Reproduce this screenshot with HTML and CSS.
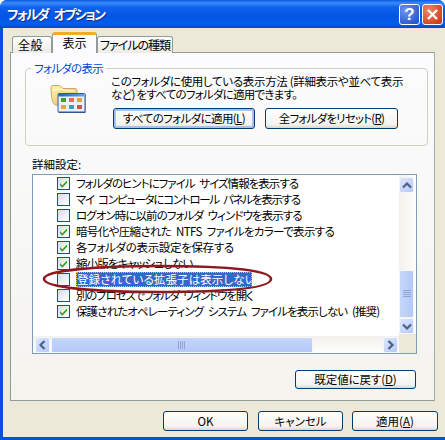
FILE: index.html
```html
<!DOCTYPE html>
<html lang="ja">
<head>
<meta charset="utf-8">
<title>フォルダ オプション</title>
<link rel="stylesheet" href="styles.css">
</head>
<body>
<svg class="defs" width="0" height="0">
  <defs>
    <symbol id="tick" viewBox="0 0 11 11"><path d="M2 5l2.300 2.500L9 2.500v2.300L4.300 9.800 2 7.300z" fill="#21a121"/></symbol>
  </defs>
</svg>
<div class="window">
  <header class="titlebar">
    <span class="title">フォルダ オプション</span>
    <div class="caption-buttons">
      <button class="cap cap-help">?</button>
      <button class="cap cap-close">
        <svg width="13" height="13" viewBox="0 0 13 13"><path d="M2 2l9 9M11 2l-9 9" stroke="#fff" stroke-width="2.400" fill="none"/></svg>
      </button>
    </div>
  </header>
  <div class="client">
    <nav class="tabs">
      <div class="tab tab-general">全般</div>
      <div class="tab tab-active">表示</div>
      <div class="tab tab-types">ファイルの種類</div>
    </nav>
    <section class="panel">
      <fieldset class="group">
        <legend class="legend">フォルダの表示</legend>
        <div class="group-body">
          <svg class="folder-icon" width="36" height="30" viewBox="0 0 36 30">
            <defs>
              <linearGradient id="fold" x1="0" y1="0" x2="1" y2="1"><stop offset="0" stop-color="#fff3b8"/><stop offset="1" stop-color="#e0bd5c"/></linearGradient>
              <linearGradient id="bar" x1="0" y1="0" x2="1" y2="0"><stop offset="0" stop-color="#2a5fc0"/><stop offset="1" stop-color="#6f9fe8"/></linearGradient>
            </defs>
            <path d="M1 3.500Q1 1.500 3 1.500h7l3 3h12q2 0 2 2V21H6Q2.500 21 1.500 12z" fill="url(#fold)" stroke="#c9ad5e"/>
            <path d="M3 6.500q5-2 10-1l3 1.500h9" fill="none" stroke="#fffbe0"/>
            <rect x="8.500" y="10" width="27" height="19" fill="#33507f"/>
            <rect x="8" y="9.500" width="27" height="18.500" rx="1" fill="#eaf0f7" stroke="#2f5c9e"/>
            <rect x="8.500" y="10" width="26" height="2.500" fill="url(#bar)"/>
            <rect x="11" y="14" width="5" height="4" fill="#3f9b2a"/><rect x="19" y="14" width="5" height="4" fill="#e0705a"/><rect x="27" y="14" width="5" height="4" fill="#d6a63a"/>
            <rect x="11" y="21" width="5" height="4" fill="#e9a927"/><rect x="19" y="21" width="5" height="4" fill="#2d9fd0"/><rect x="27" y="21" width="5" height="4" fill="#d8503f"/>
          </svg>
          <div class="group-main">
            <p class="desc"><span class="desc-1">このフォルダに使用している表示方法 (詳細表示や並べて表示</span><br><span class="desc-2">など) をすべてのフォルダに適用できます。</span></p>
            <div class="group-buttons">
              <button class="btn btn-default btn-apply-all">すべてのフォルダに適用(<u>L</u>)</button>
              <button class="btn btn-reset-all">全フォルダをリセット(<u>R</u>)</button>
            </div>
          </div>
        </div>
      </fieldset>
      <div class="adv-label">詳細設定:</div>
      <div class="list">
        <div class="list-view">
          <ul class="rows">
            <li class="row"><span class="check"><svg width="11" height="11"><use href="#tick"/></svg></span><span class="label fit-1">フォルダのヒントにファイル サイズ情報を表示する</span></li>
            <li class="row"><span class="check"></span><span class="label fit-2">マイ コンピュータにコントロール パネルを表示する</span></li>
            <li class="row"><span class="check"></span><span class="label fit-3">ログオン時に以前のフォルダ ウィンドウを表示する</span></li>
            <li class="row"><span class="check"><svg width="11" height="11"><use href="#tick"/></svg></span><span class="label fit-4">暗号化や圧縮された NTFS ファイルをカラーで表示する</span></li>
            <li class="row"><span class="check"><svg width="11" height="11"><use href="#tick"/></svg></span><span class="label fit-5">各フォルダの表示設定を保存する</span></li>
            <li class="row"><span class="check"><svg width="11" height="11"><use href="#tick"/></svg></span><span class="label fit-6">縮小版をキャッシュしない</span></li>
            <li class="row"><span class="check"></span><span class="label label-selected fit-7">登録されている拡張子は表示しない</span></li>
            <li class="row"><span class="check"></span><span class="label fit-8">別のプロセスでフォルダ ウィンドウを開く</span></li>
            <li class="row"><span class="check"><svg width="11" height="11"><use href="#tick"/></svg></span><span class="label fit-9">保護されたオペレーティング システム ファイルを表示しない (推奨)</span></li>
          </ul>
          <div class="hscroll">
            <div class="sb-btn">
              <svg width="9" height="10" viewBox="0 0 9 10"><path d="M6.500 1L2.500 5l4 4" stroke="#4d6185" stroke-width="2.200" fill="none"/></svg>
            </div>
            <div class="hthumb"><svg class="grip" width="8" height="8"><path d="M.5 0v8M2.500 0v8M4.500 0v8M6.500 0v8" stroke="#8ea5d8" fill="none"/></svg></div>
            <div class="htrack"></div>
            <div class="sb-btn">
              <svg width="9" height="10" viewBox="0 0 9 10"><path d="M2.500 1l4 4-4 4" stroke="#4d6185" stroke-width="2.200" fill="none"/></svg>
            </div>
          </div>
        </div>
        <div class="vscroll">
          <div class="sb-btn">
            <svg width="10" height="9" viewBox="0 0 10 9"><path d="M1 6.500l4-4 4 4" stroke="#4d6185" stroke-width="2.200" fill="none"/></svg>
          </div>
          <div class="vtrack"></div>
          <div class="vthumb"><svg class="grip" width="8" height="8"><path d="M0 .5h8M0 2.500h8M0 4.500h8M0 6.500h8" stroke="#8ea5d8" fill="none"/></svg></div>
          <div class="sb-btn">
            <svg width="10" height="9" viewBox="0 0 10 9"><path d="M1 2.500l4 4 4-4" stroke="#4d6185" stroke-width="2.200" fill="none"/></svg>
          </div>
          <div class="corner"></div>
        </div>
      </div>
      <div class="restore-row">
        <button class="btn btn-restore">既定値に戻す(<u>D</u>)</button>
      </div>
    </section>
    <footer class="footer">
      <button class="btn btn-foot">OK</button>
      <button class="btn btn-foot">キャンセル</button>
      <button class="btn btn-foot btn-foot-last">適用(<u>A</u>)</button>
    </footer>
  </div>
</div>
<svg class="annotation" width="240" height="36" viewBox="0 0 240 36">
  <path d="M6 18C6 9 62 5 119 5C192 5 233 9 233 18C233 27 192 31 119 31C62 31 6 27 6 18Z" fill="none" stroke="#8c1a1f" stroke-width="2.600"/>
</svg>
</body>
</html>
```
FILE: styles.css
```css
* { box-sizing: border-box; }
html, body { margin: 0; padding: 0; }
body {
  width: 445px;
  height: 440px;
  overflow: hidden;
  position: relative;
  background: #fff;
  font-family: "Noto Sans CJK JP", "Liberation Sans", sans-serif;
  font-size: 11.5px;
  font-feature-settings: "palt";
  color: #000;
}
.defs { position: absolute; }
.window {
  width: 445px;
  height: 440px;
  display: flex;
  flex-direction: column;
  background: #0a4fdc;
  border-radius: 7px 7px 0 0;
  overflow: hidden;
}
.titlebar {
  height: 28px;
  flex: none;
  display: flex;
  align-items: center;
  justify-content: space-between;
  padding: 0 2px 0 7px;
  background: linear-gradient(180deg, #0a58e6 0, #3a8bf6 3px, #0f62ee 7px, #0355e3 16px, #045ced 24px, #0348c8 28px);
}
.title {
  color: #fff;
  font-weight: 700;
  font-size: 13px;
  letter-spacing: -1.6px;
  word-spacing: 4px;
  line-height: 16px;
  white-space: nowrap;
  text-shadow: 1px 1px 0 #0b2c8c;
}
.caption-buttons { display: flex; gap: 2px; }
.cap {
  width: 21px;
  height: 21px;
  padding: 0;
  border: 1px solid #fff;
  border-radius: 3px;
  display: flex;
  align-items: center;
  justify-content: center;
  color: #fff;
  font-family: "Liberation Sans", sans-serif;
  font-weight: 700;
  font-size: 17px;
  line-height: 1;
}
.cap-help { background: radial-gradient(circle at 30% 30%, #6f96ea, #2a57cf 80%); }
.cap-close { background: radial-gradient(circle at 30% 30%, #ec8a66, #d2401a 80%); }
.client {
  flex: 1;
  margin: 0 0 3px 3px;
  background: #ece9d8;
  padding: 5px 7px 0 7px;
  display: flex;
  flex-direction: column;
  min-height: 0;
}
.tabs {
  display: flex;
  align-items: flex-end;
  height: 20px;
  padding-left: 2px;
  position: relative;
  z-index: 1;
  margin-bottom: -1px;
}
.tab {
  height: 17px;
  border: 1px solid #919b9c;
  border-bottom: 0;
  border-radius: 3px 3px 0 0;
  background: linear-gradient(#fff, #ecebe4);
  text-align: center;
  line-height: 16px;
  font-size: 12px;
  white-space: nowrap;
}
.tab-general { width: 40px; padding-right: 3px; letter-spacing: 0.5px; }
.tab-types { width: 76px; letter-spacing: -1px; }
.tab-active {
  width: 45px;
  height: 21px;
  background: #fcfcfe;
  border: 1px solid #919b9c;
  border-top: 3px solid #f4a92f;
  border-bottom: 0;
  line-height: 16px;
}
.panel {
  width: 425px;
  height: 349px;
  flex: none;
  border: 1px solid #919b9c;
  border-right-color: #aaa;
  background: linear-gradient(#fcfcfe, #f4f3ee);
  padding: 8px 6px 0 14px;
  display: flex;
  flex-direction: column;
}
.group {
  margin: 0;
  padding: 0;
  height: 85px;
  width: 403px;
  flex: none;
  border: 1px solid #d0d0bf;
  border-radius: 4px;
  min-inline-size: 0;
}
.legend {
  margin-left: 5px;
  padding: 0 3px;
  color: #0046d5;
  line-height: 14px;
  letter-spacing: -0.7px;
  white-space: nowrap;
}
.group-body { display: flex; }
.folder-icon { margin: 9px 0 0 24px; flex: none; }
.group-main { margin-left: 25px; }
.desc { margin: 0; line-height: 13px; width: 300px; white-space: nowrap; }
.desc-1 { letter-spacing: -0.33px; }
.desc-2 { letter-spacing: -0.75px; }
.group-buttons { display: flex; gap: 10px; margin: 7px 0 0 2px; }
.btn {
  height: 21px;
  padding: 0;
  border: 1px solid #003c74;
  border-radius: 3px;
  background: linear-gradient(#fff, #f4f3ee 80%, #dcd8c8);
  font-family: inherit;
  font-size: 11.5px;
  font-feature-settings: "palt";
  line-height: 17px;
  color: #000;
  white-space: nowrap;
}
.btn-default { box-shadow: inset 0 0 0 2px #a9c1ee; }
.btn-apply-all { width: 142px; letter-spacing: -0.6px; }
.btn-reset-all { width: 133px; letter-spacing: -0.77px; }
.adv-label { margin: 10px 0 0 7px; height: 16px; line-height: 16px; flex: none; }
.list {
  margin: 2px 0 0 7px;
  width: 385px;
  height: 180px;
  flex: none;
  border: 1px solid #7f9db9;
  display: flex;
  background: #fff;
}
.list-view { width: 366px; display: flex; flex-direction: column; }
.rows { list-style: none; margin: 0; padding: 0; flex: 1; }
.row { height: 16px; display: flex; align-items: center; padding-left: 24px; white-space: nowrap; }
.check {
  width: 13px;
  height: 13px;
  flex: none;
  border: 1px solid #1c5180;
  background: linear-gradient(135deg, #dcdcd7, #fff);
  display: flex;
  align-items: center;
  justify-content: center;
}
.label { margin-left: 6px; line-height: 15px; word-spacing: 3px; }
.fit-1 { letter-spacing: -0.97px; }
.fit-2 { letter-spacing: -1.28px; }
.fit-3 { letter-spacing: -0.92px; }
.fit-4 { letter-spacing: -0.65px; }
.fit-5 { letter-spacing: -0.33px; }
.fit-6 { letter-spacing: -0.85px; }
.fit-7 { letter-spacing: 0.1px; }
.fit-8 { letter-spacing: -1.2px; }
.fit-9 { letter-spacing: -0.89px; }
.label-selected {
  background: #316ac5;
  color: #fff;
  outline: 1px dotted #e8c34a;
  outline-offset: -1px;
  padding: 0 1px;
  width: 176px;
  height: 15px;
}
.hscroll { height: 17px; flex: none; display: flex; gap: 1px; padding: 1px 1px 0 2px; background: linear-gradient(#f3f1ec, #fefefb); }
.sb-btn {
  width: 15px;
  height: 16px;
  flex: none;
  border: 1px solid #f4f6fb;
  border-radius: 2px;
  background: linear-gradient(135deg, #dce6fd, #b6c9f8);
  display: flex;
  align-items: center;
  justify-content: center;
}
.hthumb {
  width: 262px;
  height: 16px;
  border: 1px solid #f4f6fb;
  border-radius: 2px;
  background: linear-gradient(#c6d6fb, #b5c9f8);
  display: flex;
  align-items: center;
  justify-content: center;
}
.htrack { flex: 1; }
.vscroll {
  width: 17px;
  flex: none;
  display: flex;
  flex-direction: column;
  align-items: flex-start;
  padding-top: 2px;
  background: linear-gradient(90deg, #f3f1ec, #fefefb);
}
.vtrack { height: 77px; flex: none; }
.vthumb {
  width: 15px;
  height: 48px;
  flex: none;
  border: 1px solid #f4f6fb;
  border-radius: 2px;
  background: linear-gradient(90deg, #c6d6fb, #b5c9f8);
  display: flex;
  align-items: center;
  justify-content: center;
}
.corner { flex: 1; width: 17px; background: #ece9d8; }
.grip { display: block; }
.restore-row { display: flex; justify-content: flex-end; margin-top: 16px; padding-right: 12px; }
.btn-restore { width: 121px; height: 19px; line-height: 15px; letter-spacing: -0.1px; }
.footer { display: flex; justify-content: flex-end; gap: 10px; margin-top: 10px; }
.btn-foot { width: 85px; height: 20px; line-height: 16px; }
.btn-foot-last { width: 86px; margin-left: -1px; }
.annotation { position: absolute; left: 38px; top: 261px; }
```
